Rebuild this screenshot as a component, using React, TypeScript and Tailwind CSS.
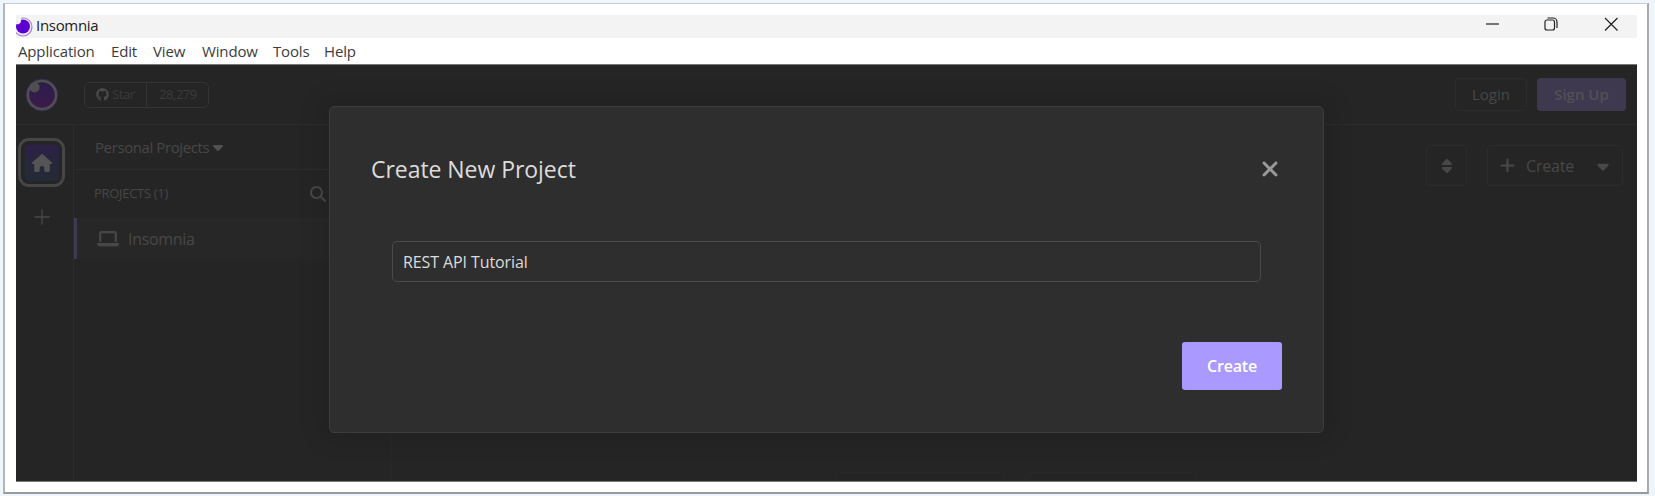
import type { ReactNode } from 'react';
import { FaCaretDown, FaGithub, FaHouse, FaMagnifyingGlass, FaPlus, FaSort, FaXmark } from 'react-icons/fa6';

const menus = [
  { label: 'Application', box: 'w-[77px] mr-4' },
  { label: 'Edit', box: 'w-[26px] mr-4' },
  { label: 'View', box: 'w-[32px] mr-[17px]' },
  { label: 'Window', box: 'w-[55px] mr-4' },
  { label: 'Tools', box: 'w-[35px] mr-4' },
  { label: 'Help', box: 'w-[32px]' },
];

function Logo() {
  return (
    <svg className="size-[34px]" viewBox="0 0 34 34">
      <defs>
        <linearGradient id="orb" x1="0" y1="0" x2="0" y2="1">
          <stop offset="0" stopColor="#2b1d4b" />
          <stop offset="1" stopColor="#3b1b4b" />
        </linearGradient>
      </defs>
      <circle cx="17" cy="17" r="16" fill="#4f4f4f" stroke="#342552" strokeWidth="1" />
      <circle cx="17" cy="17" r="12.800" fill="url(#orb)" />
      <circle cx="9.600" cy="9.400" r="5" fill="#4f4f4f" />
    </svg>
  );
}

function AppIcon() {
  return (
    <svg className="h-[20px] w-[17px]" viewBox="0 0 17 20">
      <circle cx="7" cy="10" r="9" fill="#f0e8fb" stroke="#a582dd" strokeWidth="1.200" />
      <circle cx="7" cy="9.500" r="7" fill="#5c00d2" />
      <path d="M0 0h5v4a3.500 3.500 0 0 1-5 3z" fill="#f3f0f8" />
    </svg>
  );
}

function TitleBar() {
  return (
    <div className="flex h-[23px] shrink-0 items-center bg-[#f3f3f3] text-[#1c1c1c]">
      <AppIcon />
      <span className="ml-[3px] pb-[3px] text-[15px] tracking-[-0.3px]">Insomnia</span>
      <svg className="ml-auto h-[23px] w-[160px]" viewBox="0 0 160 23" fill="none" stroke="#222" strokeWidth="1.200">
        <path d="M9 9H22" />
        <rect x="68" y="5" width="9.500" height="10" rx="2" />
        <path d="M70.500 3H76a4 4 0 0 1 4 4V13" />
        <path d="M128 3L140.500 15.500M140.500 3L128 15.500" />
      </svg>
    </div>
  );
}

function OutlineBox({ className, children }: { className: string; children: ReactNode }) {
  return <div className={`flex items-center rounded-[4px] border border-[#2c2c2c] ${className}`}>{children}</div>;
}

function Header() {
  return (
    <div className="flex h-[60px] shrink-0 items-center border-b border-[#2c2c2c] pr-[11px] pl-[9px]">
      <Logo />
      <div className="ml-[25px] flex h-[26px] w-[125px] items-center rounded-[5px] border border-[#333] text-[13px] text-[#3b3b3b]">
        <div className="flex h-full w-[62px] items-center border-r border-[#333] pl-[11px]">
          <FaGithub className="size-[13px] text-[#4a4a4a]" />
          <span className="ml-[3px] tracking-[-0.35px]">Star</span>
        </div>
        <span className="ml-[12px] tracking-[-0.45px]">28,279</span>
      </div>
      <OutlineBox className="ml-auto h-[33px] w-[72px] justify-center text-[15px] text-[#474747]">Login</OutlineBox>
      <div className="ml-[10px] flex h-[33px] w-[89px] items-center justify-center rounded-[4px] bg-[#3f394f] text-[15px] font-semibold text-[#525054]">
        Sign Up
      </div>
    </div>
  );
}

function Rail() {
  return (
    <div className="flex w-[58px] shrink-0 flex-col items-center border-r border-[#2c2c2c] pt-[13px] pr-[6px]">
      <div className="flex h-[49px] w-[47px] items-center justify-center rounded-[11px] border-3 border-[#464646]">
        <div className="flex h-[36px] w-[34px] items-center justify-center rounded-[4px] bg-linear-to-b from-[#2c2147] to-[#232b33]">
          <FaHouse className="size-[20px] text-[#555]" />
        </div>
      </div>
      <svg className="mt-[22px] size-[16px]" viewBox="0 0 16 16" stroke="#484848" strokeWidth="1.300">
        <path d="M8 .5V15.500M.5 8H15.500" />
      </svg>
    </div>
  );
}

function Sidebar() {
  return (
    <div className="flex w-[317px] shrink-0 flex-col border-r border-[#292929] text-[#474747]">
      <div className="flex h-[45px] shrink-0 items-center border-b border-[#2c2c2c] pl-[21px] text-[15px]">
        <span className="w-[114px] tracking-[-0.4px] whitespace-nowrap">Personal Projects</span>
        <FaCaretDown className="ml-[1px] size-[16px] text-[#505050]" />
      </div>
      <div className="flex h-[48px] items-center pr-[64px] pl-[20px]">
        <span className="text-[13px] tracking-[-0.3px]">PROJECTS (1)</span>
        <FaMagnifyingGlass className="ml-auto size-[16px]" />
      </div>
      <div className="flex h-[41px] items-center border-l-3 border-[#3f3a50] bg-[#272727] pl-[20px]">
        <svg className="h-[16px] w-[22px]" viewBox="0 0 22 16">
          <path d="M3.200 11V2.500Q3.200 1.200 4.500 1.200H17.500Q18.800 1.200 18.800 2.500V11" fill="none" stroke="#474747" strokeWidth="2.200" />
          <path d="M0 12H22Q22 15.500 19 15.500H3Q0 15.500 0 12Z" fill="#474747" />
        </svg>
        <span className="ml-[9px] text-[16px] tracking-[-0.3px]">Insomnia</span>
      </div>
    </div>
  );
}

function Content() {
  return (
    <div className="flex grow flex-col justify-between">
      <div className="flex justify-end gap-[20px] pt-[20px] pr-[14px] text-[#484848]">
        <OutlineBox className="h-[41px] w-[41px] justify-center">
          <FaSort className="size-[16px]" />
        </OutlineBox>
        <OutlineBox className="h-[41px] w-[136px] pl-[11px] text-[16px]">
          <FaPlus className="size-[17px]" />
          <span className="ml-[10px] tracking-[-0.2px]">Create</span>
          <FaCaretDown className="ml-auto mr-[10px] size-[18px]" />
        </OutlineBox>
      </div>
      <div className="flex justify-end gap-[20px] pr-[440px]">
        <div className="h-[9px] w-[169px] rounded-t-[4px] border border-b-0 border-[#282828]" />
        <div className="h-[9px] w-[172px] rounded-t-[4px] border border-b-0 border-[#282828]" />
      </div>
    </div>
  );
}

function Modal() {
  return (
    <div className="absolute top-[41px] left-[313px] flex h-[327px] w-[995px] flex-col rounded-[5px] border border-[#3d3d3d] bg-[#2e2e2e] pr-[41px] pl-[41px] text-[#dcdcdc] shadow-[0_0_24px_8px_rgba(0,0,0,0.1)]">
      <div className="mt-[44px] flex h-[36px] items-center">
        <h1 className="text-[23px] tracking-[-0.05px]">Create New Project</h1>
        <FaXmark className="ml-auto size-[24px] text-[#999]" />
      </div>
      <div className="mt-[54px] mr-[21px] ml-[21px] flex h-[41px] items-center rounded-[5px] border border-[#4a4a4a] pl-[10px] text-[16px] tracking-[-0.1px]">
        REST API Tutorial
      </div>
      <button className="mt-[60px] h-[48px] w-[100px] self-end rounded-[3px] bg-[#aa99ff] text-[16px] font-semibold tracking-[-0.15px] text-white">
        Create
      </button>
    </div>
  );
}

export default function App() {
  return (
    <div className="h-[496px] w-[1655px] bg-[#edf5fd] pt-[3px] pl-[3px] font-['Open_Sans','Noto_Sans',sans-serif]">
      <div className="flex h-[491px] w-[1646px] flex-col border-t border-r-2 border-b-2 border-l-2 border-t-[#ccc] border-r-[#aaa] border-b-[#999] border-l-[#b5b5b5] bg-white pt-[11px] pr-[10px] pl-[11px]">
        <TitleBar />
        <div className="flex h-[26px] shrink-0 items-center pl-[2px] text-[15px] tracking-[-0.15px] text-[#3c3c3c]">
          {menus.map((m) => (
            <span key={m.label} className={`shrink-0 whitespace-nowrap ${m.box}`}>{m.label}</span>
          ))}
        </div>
        <div className="relative flex h-[418px] shrink-0 flex-col overflow-hidden border-t border-b border-t-[#777] border-b-[#777] bg-[#252525]">
          <Header />
          <div className="flex grow">
            <Rail />
            <Sidebar />
            <Content />
          </div>
          <Modal />
        </div>
      </div>
    </div>
  );
}
